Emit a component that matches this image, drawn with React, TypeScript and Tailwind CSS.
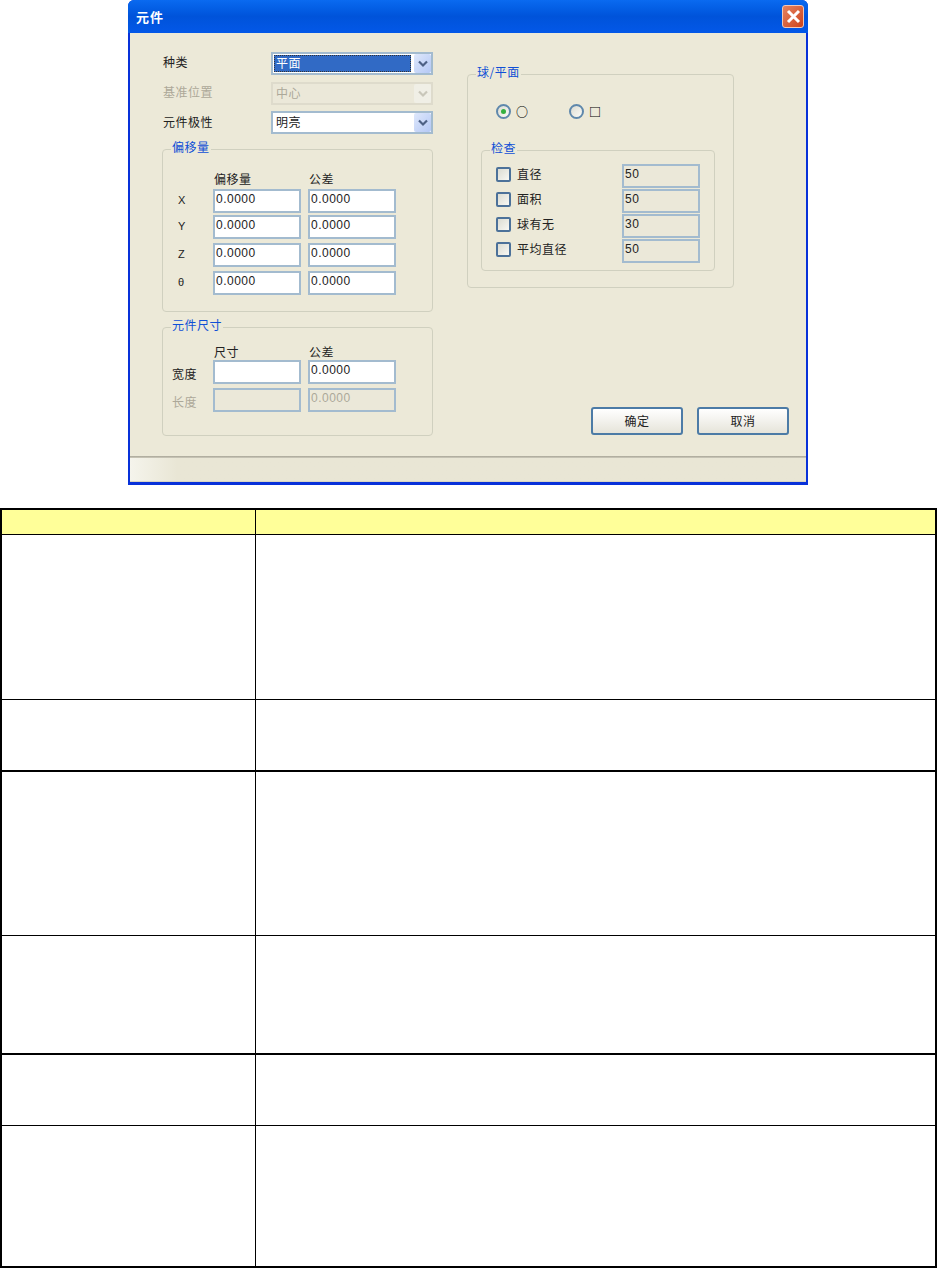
const cjk = "font-['Noto_Sans_CJK_SC','Liberation_Sans',sans-serif]";

function Field({ value = "", w = "w-[88px]", h = "h-6", disabled = false, tone = "white" }: { value?: string; w?: string; h?: string; disabled?: boolean; tone?: string }) {
  return (
    <div
      className={`${w} ${h} shrink-0 border-2 border-[#a3bbcf] pl-[1px] font-['Liberation_Sans',sans-serif] text-[12px] leading-[17px] tracking-[0.5px] ${
        disabled || tone === "beige" ? "bg-[#ebe8d9]" : "bg-white"
      } ${disabled ? "text-[#aca899]" : "text-[#222]"}`}
    >
      {value}
    </div>
  );
}

function Chevron({ color = "#4d6185" }: { color?: string }) {
  return (
    <svg width="10" height="8" viewBox="0 0 10 8" fill="none">
      <path d="M1 1.5 L5 5.5 L9 1.5" stroke={color} strokeWidth="2.2" />
    </svg>
  );
}

function Select({ text, focused = false, disabled = false }: { text: string; focused?: boolean; disabled?: boolean }) {
  return (
    <div className={`flex h-[23px] w-[162px] items-center border-2 ${disabled ? "border-[#dedbcc] bg-[#ebe8d9]" : "border-[#a3bbcf] bg-white"} pl-[1px]`}>
      <div
        className={`flex h-[17px] w-[137px] shrink-0 items-center pb-[2px] ${cjk} text-[12px] tracking-[0.5px] ${
          focused ? "border border-dotted border-[#333] bg-[#316ac5] pl-[1px] text-white" : disabled ? "pl-[2px] text-[#aca899]" : "pl-[2px] text-[#222]"
        }`}
      >
        {text}
      </div>
      <div
        className={`ml-[3px] flex h-[19px] w-[17px] shrink-0 items-center justify-center rounded-[2px] ${
          disabled ? "bg-[#f0efe6]" : "bg-gradient-to-br from-[#dfe8fb] to-[#b4c8f5]"
        }`}
      >
        <Chevron color={disabled ? "#c9c7ba" : "#4d6185"} />
      </div>
    </div>
  );
}

function Group({ title, className, children }: { title: string; className: string; children: React.ReactNode }) {
  return (
    <div className={`relative rounded-[4px] border border-[#d0d0bf] ${className}`}>
      <span className={`absolute left-[8px] top-[-12px] bg-[#ece9d8] px-[1px] ${cjk} text-[12px] leading-[18px] tracking-[0.5px] text-[#0f4fd6]`}>{title}</span>
      {children}
    </div>
  );
}

function Label({ children, className = "" }: { children: React.ReactNode; className?: string }) {
  return <span className={`${cjk} text-[12px] leading-[16px] tracking-[0.5px] text-[#222] ${className}`}>{children}</span>;
}

function OffsetRow({ label, className = "" }: { label: string; className?: string }) {
  return (
    <div className={`flex items-center ${className}`}>
      <span className="w-[50px] pb-[2px] pl-[15px] font-['Liberation_Sans',sans-serif] text-[11px] text-[#222]">{label}</span>
      <Field value="0.0000" />
      <div className="w-[7px]" />
      <Field value="0.0000" />
    </div>
  );
}

function CheckRow({ label, value, className = "" }: { label: string; value: string; className?: string }) {
  return (
    <div className={`flex h-6 items-start pl-[14px] ${className}`}>
      <div className="mt-[3px] h-[15px] w-[15px] shrink-0 rounded-[2px] border-2 border-[#4c7199] bg-gradient-to-br from-[#dcdcd2] to-[#f8f8f4]" />
      <Label className="ml-[6px] mt-[2px] w-[105px]">{label}</Label>
      <Field value={value} w="w-[78px]" tone="beige" />
    </div>
  );
}

function Radio({ on = false }: { on?: boolean }) {
  return (
    <div className="flex h-[15px] w-[15px] shrink-0 items-center justify-center rounded-full border-2 border-[#5f88ac] bg-gradient-to-br from-[#dcdcd2] to-[#fbfbf7]">
      {on && <div className="h-[5px] w-[5px] rounded-full bg-[#34b03f]" />}
    </div>
  );
}

function Button({ text }: { text: string }) {
  return (
    <div className={`flex h-[28px] w-[92px] shrink-0 items-center justify-center rounded-[3px] border-2 border-[#4c7ba6] bg-gradient-to-b from-white to-[#e6e4da] ${cjk} text-[12px] tracking-[0.5px] text-[#222]`}>
      {text}
    </div>
  );
}

function Dialog() {
  return (
    <div className="ml-[128px] flex h-[485px] w-[680px] flex-col rounded-t-[6px] bg-[#0831d9] px-[2px] pb-[3px]">
      <div className="-mx-[2px] flex h-[33px] shrink-0 items-center justify-between rounded-t-[6px] bg-gradient-to-b from-[#0a6af0] via-[#0053da] to-[#0358e8] pl-2 pr-1">
        <span className={`${cjk} text-[13px] font-bold tracking-[1px] text-white`}>元件</span>
        <div className="flex h-[23px] w-[22px] items-center justify-center rounded-[3px] border border-[#f3c7b6] bg-gradient-to-br from-[#e5825f] to-[#cc4218]">
          <svg width="15" height="15" viewBox="0 0 15 15"><path d="M2 2 L13 13 M13 2 L2 13" stroke="white" strokeWidth="3" /></svg>
        </div>
      </div>

      <div className="flex min-h-0 flex-1 flex-col bg-[#ece9d8]">
        <div className="flex h-[423px] shrink-0 pl-[32px] pt-[19px]">
          <div className="w-[271px] shrink-0">
            <div className="flex h-[23px] items-center justify-between"><Label className="mb-[3px] pl-[1px]">种类</Label><Select text="平面" focused /></div>
            <div className="mt-[7px] flex h-[23px] items-center justify-between"><Label className="mb-[3px] pl-[1px] !text-[#aca899]">基准位置</Label><Select text="中心" disabled /></div>
            <div className="mt-[6px] flex h-[23px] items-center justify-between"><Label className="mb-[2px] pl-[1px]">元件极性</Label><Select text="明亮" /></div>

            <Group title="偏移量" className="mt-[15px] h-[163px] w-[271px]">
              <div className="flex h-[39px] items-end pb-[2px]">
                <Label className="ml-[51px] w-[95px]">偏移量</Label>
                <Label>公差</Label>
              </div>
              <OffsetRow label="X" />
              <OffsetRow label="Y" className="mt-[2px]" />
              <OffsetRow label="Z" className="mt-[4px]" />
              <OffsetRow label="θ" className="mt-[4px]" />
            </Group>

            <Group title="元件尺寸" className="mt-[15px] h-[109px] w-[271px]">
              <div className="flex h-[32px] items-end">
                <Label className="ml-[51px] w-[95px]">尺寸</Label>
                <Label>公差</Label>
              </div>
              <div className="flex items-center">
                <Label className="ml-[9px] w-[41px] pt-[3px]">宽度</Label>
                <Field />
                <div className="w-[7px]" />
                <Field value="0.0000" />
              </div>
              <div className="mt-[4px] flex items-center">
                <Label className="ml-[9px] w-[41px] pt-[4px] !text-[#aca899]">长度</Label>
                <Field disabled />
                <div className="w-[7px]" />
                <Field value="0.0000" disabled />
              </div>
            </Group>
          </div>

          <div className="ml-[34px] w-[322px] shrink-0">
            <div className="h-[22px]" />
            <Group title="球/平面" className="h-[214px] w-[267px]">
              <div className="flex h-[75px] items-start pl-[28px] pt-[29px]">
                <Radio on />
                <span className={`ml-[5px] ${cjk} text-[12px] font-bold leading-[15px] text-black`}>○</span>
                <div className="ml-[41px]"><Radio /></div>
                <span className={`ml-[5px] ${cjk} text-[12px] font-bold leading-[15px] text-black`}>□</span>
              </div>
              <Group title="检查" className="ml-[13px] h-[121px] w-[234px]">
                <div className="pt-[13px]">
                  <CheckRow label="直径" value="50" />
                  <CheckRow label="面积" value="50" className="mt-[1px]" />
                  <CheckRow label="球有无" value="30" className="mt-[1px]" />
                  <CheckRow label="平均直径" value="50" className="mt-[1px]" />
                </div>
              </Group>
            </Group>
            <div className="mt-[119px] flex gap-[14px] pl-[124px]">
              <Button text="确定" />
              <Button text="取消" />
            </div>
          </div>
        </div>
        <div className="h-[2px] shrink-0 bg-gradient-to-b from-[#a8a597] to-[#cfccbd]" />
        <div className="flex-1 border-b border-[#d8d5c4] bg-gradient-to-r from-[#f5f4ec] from-0% to-[#e9e6d5] to-[7%]" />
      </div>
    </div>
  );
}

const rows: [string, string][] = [
  ["h-[164px]", "border-b border-black"],
  ["h-[70px]", "border-b-2 border-black"],
  ["h-[163px]", "border-b border-black"],
  ["h-[117px]", "border-b-2 border-black"],
  ["h-[70px]", "border-b border-black"],
  ["h-[140px]", ""],
];

export default function App() {
  return (
    <div className="h-[1268px] w-[937px] overflow-hidden bg-white">
      <Dialog />
      <div className="mt-[23px] border-x-2 border-t-2 border-b-2 border-black">
        <div className="flex h-[25px] border-b border-black bg-[#ffff99]">
          <div className="w-[254px] border-r border-black" />
          <div className="flex-1" />
        </div>
        {rows.map(([h, b], i) => (
          <div key={i} className={`flex ${h} ${b} box-content`}>
            <div className="w-[254px] border-r border-black" />
            <div className="flex-1" />
          </div>
        ))}
      </div>
    </div>
  );
}
